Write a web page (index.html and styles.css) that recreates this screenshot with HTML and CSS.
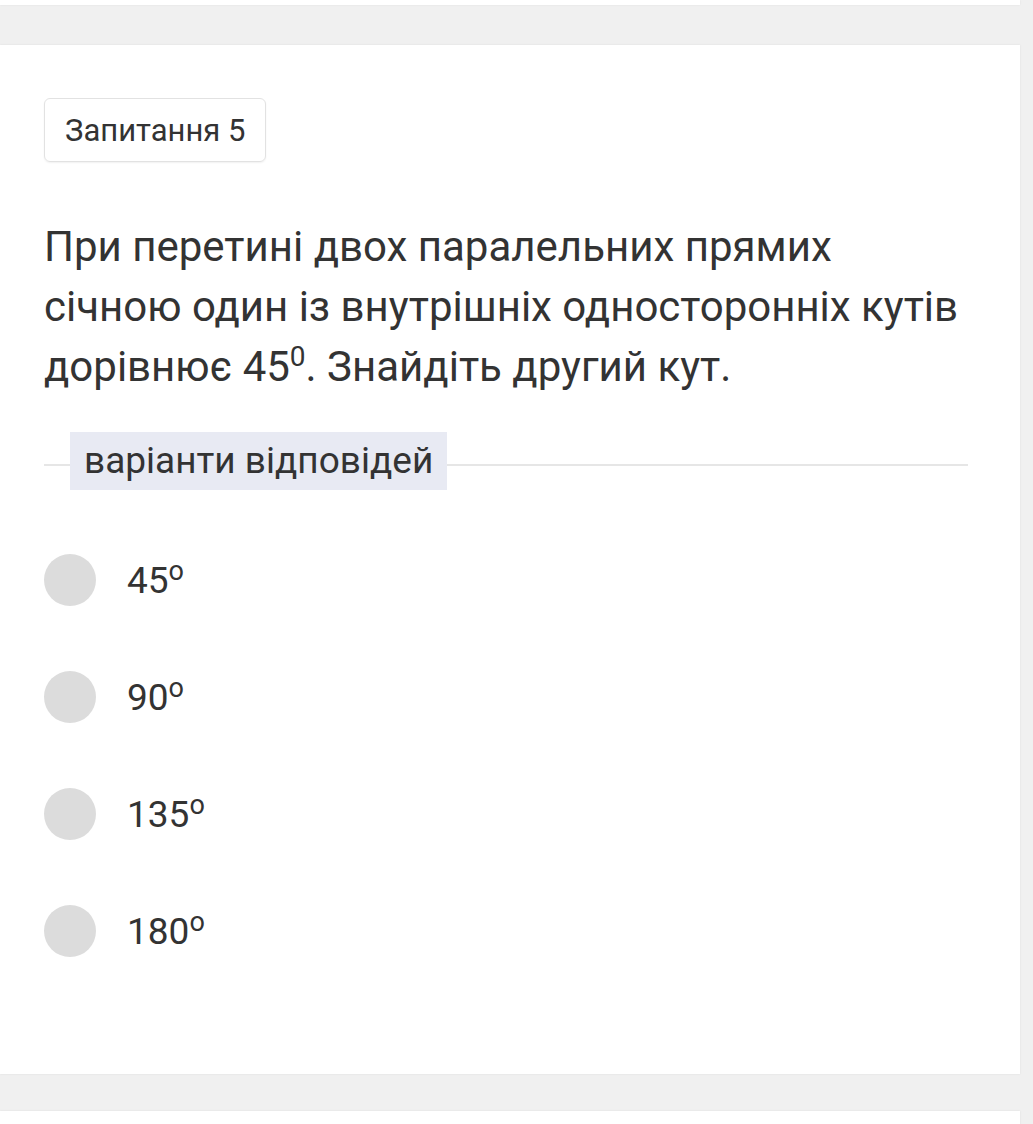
FILE: index.html
```html
<!DOCTYPE html>
<html lang="uk">
<head>
  <meta charset="UTF-8">
  <meta name="viewport" content="width=device-width, initial-scale=1.0">
  <title>Запитання 5</title>
  <link rel="stylesheet" href="styles.css">
</head>
<body>
  <div class="card card-top"></div>
  <div class="card question">
    <div class="q-num">Запитання 5</div>
    <p class="q-text">При перетині двох паралельних прямих січною один із внутрішніх односторонніх кутів дорівнює 45<sup>0</sup>. Знайдіть другий кут.</p>
    <div class="divider">
      <span class="divider-label">варіанти відповідей</span>
    </div>
    <ul class="options">
      <li class="option"><span class="radio"></span><span class="opt-text">45<sup>o</sup></span></li>
      <li class="option"><span class="radio"></span><span class="opt-text">90<sup>o</sup></span></li>
      <li class="option"><span class="radio"></span><span class="opt-text">135<sup>o</sup></span></li>
      <li class="option"><span class="radio"></span><span class="opt-text">180<sup>o</sup></span></li>
    </ul>
  </div>
  <div class="card card-bottom"></div>
</body>
</html>
```
FILE: styles.css
```css
body
{
  margin:0;
  background:#f0f0f0;
  font-family:Roboto, "Noto Sans", sans-serif;
  color:#333;
}
.card
{
  background:#fff;
  width:1020px;
  box-shadow:0 0 2px rgba(0,0,0,0.08);
}
.card-top
{
  height:5px;
  margin-bottom:40px;
}
.card-bottom
{
  height:20px;
  margin-top:37px;
}
.question
{
  padding:53px 30px 60px 44px;
  box-sizing:border-box;
  height:1029px;
}
.q-num
{
  display:inline-block;
  border:1px solid #e2e2e2;
  border-radius:6px;
  padding:0 20px;
  height:64px;
  line-height:64px;
  font-size:31px;
  box-sizing:border-box;
  box-shadow:0 1px 2px rgba(0,0,0,0.06);
}
.q-text
{
  max-width:926px;
  margin:55px 0 0 0;
  font-size:42px;
  line-height:60px;
  color:#333;
}
.q-text sup
{
  font-size:28px;
  line-height:0;
}
.divider
{
  width:924px;
  margin-top:35px;
  height:58px;
  display:flex;
  align-items:center;
  background:linear-gradient(#e6e6e6,#e6e6e6) no-repeat 0 32px / 100% 2px;
  padding-left:26px;
  box-sizing:border-box;
}
.divider-label
{
  background:#e8eaf3;
  font-size:37px;
  height:58px;
  line-height:58px;
  padding:0 14px;
  color:#333;
}
.options
{
  list-style:none;
  margin:64px 0 0 0;
  padding:0;
}
.option
{
  display:flex;
  align-items:center;
  height:52px;
  margin-bottom:65px;
}
.radio
{
  width:52px;
  height:52px;
  border-radius:50%;
  background:#dcdcdc;
  flex:none;
}
.opt-text
{
  margin-left:31px;
  font-size:37px;
  color:#333;
}
.opt-text sup
{
  font-size:27px;
  line-height:0;
}
```
